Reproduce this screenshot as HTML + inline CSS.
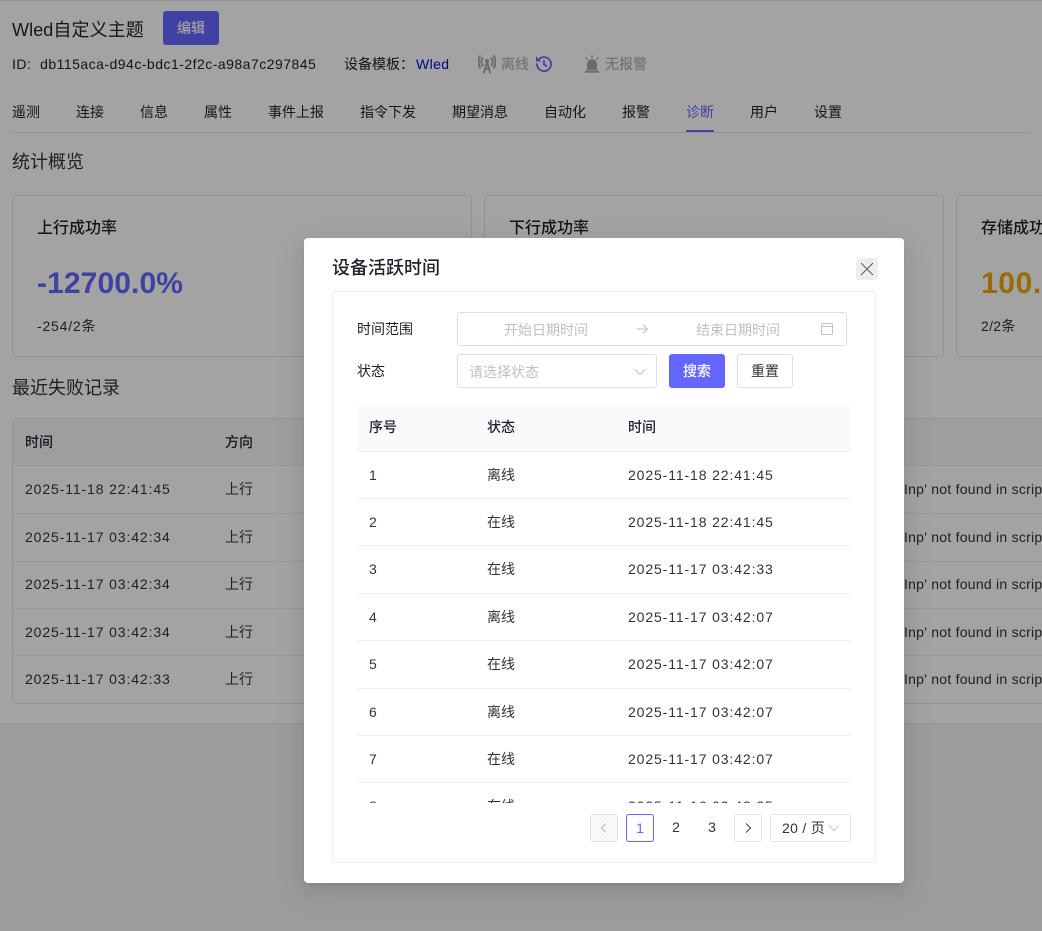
<!DOCTYPE html>
<html><head><meta charset="utf-8">
<style>
html,body{margin:0;padding:0;width:1042px;height:931px;overflow:hidden;background:#f3f4f7;}
body{position:relative;font-family:"Liberation Sans","Noto Sans CJK SC",sans-serif;color:#1d2129;font-size:14px;}
.t{position:absolute;line-height:20px;white-space:nowrap;}
.d{letter-spacing:.88px;}
.b{position:absolute;box-sizing:border-box;}
svg{position:absolute;}
#page{position:absolute;left:0;top:0;width:1042px;height:724px;background:#fff;border-bottom:1px solid #e5e6eb;box-sizing:border-box;overflow:hidden;border-top:1px solid #e4e4ea;}
#page>*{margin-top:-1px;}
#mask{position:absolute;inset:0;background:rgba(0,0,0,.36);}
#modal{position:absolute;left:304px;top:238px;width:600px;height:645px;background:#fff;border-radius:4px;box-shadow:0 6px 16px rgba(0,0,0,.08),0 3px 6px -4px rgba(0,0,0,.12),0 9px 28px 8px rgba(0,0,0,.05);}
.m{position:absolute;left:0;top:0;width:1042px;height:931px;}
.card{position:absolute;top:195px;height:162px;width:460px;border:1px solid #e5e6eb;border-radius:4px;box-sizing:border-box;}
.ln{position:absolute;height:1px;background:#eceef1;}
.pg{position:absolute;top:814px;width:28px;height:28px;box-sizing:border-box;border-radius:3px;text-align:center;line-height:26px;color:#333;}
</style></head><body>
<div id="page">
<div class="t" style="left:12px;top:20px;font-size:18px;color:#1d2129;letter-spacing:.1px">Wled自定义主题</div>
<div class="b" style="left:163px;top:11px;width:56px;height:34px;background:#6366ff;border-radius:3px;color:#fff;text-align:center;line-height:34px;font-weight:500">编辑</div>
<div class="t" style="left:12px;top:54px;color:#222;letter-spacing:.48px">ID:&nbsp; db115aca-d94c-bdc1-2f2c-a98a7c297845</div>
<div class="t" style="left:344px;top:54px;color:#222">设备模板：</div>
<div class="t" style="left:416px;top:54px;color:#0000d8;letter-spacing:.4px">Wled</div>
<svg style="left:478px;top:54px" width="18" height="20" viewBox="0 0 18 20" fill="none" stroke="#aaa" stroke-width="2" stroke-linecap="round"><path d="M4.5 4C3 6 3 9.500 4.500 11.500M13.500 4c1.500 2 1.500 5.500 0 7.500M2 2C0 5.500 0 10 2 13.500M16 2c2 3.500 2 8 0 11.500"/><circle cx="9" cy="7" r="2" fill="#aaa" stroke="none"/><path d="M9 8 6 18.500M9 8l3 10.500M7 15h4"/></svg>
<div class="t" style="left:501px;top:54px;color:#b4b4b4;font-weight:500">离线</div>
<svg style="left:535px;top:55px" width="18" height="18" viewBox="0 0 18 18" fill="none" stroke="#6366ff" stroke-width="1.700" stroke-linecap="round" stroke-linejoin="round"><path d="M3.200 5.200A7 7 0 1 1 2 9"/><path d="M1.500 2v4h4" fill="#6366ff" stroke-width="1"/><path d="M9 5.500V9.500l2.500 1.700"/></svg>
<svg style="left:583px;top:54px" width="18" height="20" viewBox="0 0 18 20" fill="#aaa" stroke="none"><path d="M4 16V10a5 5 0 0 1 10 0v6z"/><rect x="2" y="16.500" width="14" height="2.200"/><path d="M9 1v3M2.500 3.500l2 2M15.500 3.500l-2 2" stroke="#aaa" stroke-width="1.500"/></svg>
<div class="t" style="left:605px;top:54px;color:#b4b4b4;font-weight:500">无报警</div>

<div class="t" style="left:12px;top:102px">遥测</div>
<div class="t" style="left:76px;top:102px">连接</div>
<div class="t" style="left:140px;top:102px">信息</div>
<div class="t" style="left:204px;top:102px">属性</div>
<div class="t" style="left:268px;top:102px">事件上报</div>
<div class="t" style="left:360px;top:102px">指令下发</div>
<div class="t" style="left:452px;top:102px">期望消息</div>
<div class="t" style="left:544px;top:102px">自动化</div>
<div class="t" style="left:622px;top:102px">报警</div>
<div class="t" style="left:686px;top:102px;color:#6366ff">诊断</div>
<div class="t" style="left:750px;top:102px">用户</div>
<div class="t" style="left:814px;top:102px">设置</div>
<div class="ln" style="left:12px;top:132px;width:1018px;background:#e5e6eb"></div>
<div class="b" style="left:686px;top:130px;width:28px;height:2px;background:#6366ff"></div>
<div class="t" style="left:12px;top:152px;font-size:18px;color:#333">统计概览</div>

<div class="card" style="left:12px"></div>
<div class="card" style="left:484px"></div>
<div class="card" style="left:956px"></div>
<div class="t" style="left:37px;top:219px;font-size:16px;font-weight:500">上行成功率</div>
<div class="t" style="left:509px;top:219px;font-size:16px;font-weight:500">下行成功率</div>
<div class="t" style="left:981px;top:219px;font-size:16px;font-weight:500">存储成功率</div>
<div class="t" style="left:37px;top:269px;line-height:30px;font-size:30px;font-weight:700;color:#6366ff;letter-spacing:.1px">-12700.0%</div>
<div class="t" style="left:981px;top:269px;line-height:30px;font-size:30px;font-weight:700;color:#f0a80a;letter-spacing:.6px">100.0%</div>
<div class="t" style="left:37px;top:316px;color:#333;letter-spacing:.8px">-254/2条</div>
<div class="t" style="left:981px;top:316px;color:#333;letter-spacing:.3px">2/2条</div>

<div class="t" style="left:12px;top:378px;font-size:18px;color:#333">最近失败记录</div>
<div class="b" style="left:12px;top:418px;width:1100px;height:286px;border:1px solid #e5e6eb;border-radius:4px"></div>
<div class="b" style="left:13px;top:419px;width:1100px;height:46px;background:#f7f8fa"></div>
<div class="ln" style="left:13px;top:465px;width:1100px"></div>
<div class="ln" style="left:13px;top:513px;width:1100px"></div>
<div class="ln" style="left:13px;top:561px;width:1100px"></div>
<div class="ln" style="left:13px;top:608px;width:1100px"></div>
<div class="ln" style="left:13px;top:655px;width:1100px"></div>
<div class="t" style="left:25px;top:432px;font-weight:500">时间</div>
<div class="t" style="left:225px;top:432px;font-weight:500">方向</div>
<div class="t d" style="left:25px;top:479px;color:#333">2025-11-18 22:41:45</div><div class="t" style="left:225px;top:479px;color:#333">上行</div>
<div class="t d" style="left:25px;top:527px;color:#333">2025-11-17 03:42:34</div><div class="t" style="left:225px;top:527px;color:#333">上行</div>
<div class="t d" style="left:25px;top:574px;color:#333">2025-11-17 03:42:34</div><div class="t" style="left:225px;top:574px;color:#333">上行</div>
<div class="t d" style="left:25px;top:622px;color:#333">2025-11-17 03:42:34</div><div class="t" style="left:225px;top:622px;color:#333">上行</div>
<div class="t d" style="left:25px;top:669px;color:#333">2025-11-17 03:42:33</div><div class="t" style="left:225px;top:669px;color:#333">上行</div>
<div class="t" style="left:904px;top:479px;color:#333;letter-spacing:.25px">Inp' not found in script</div>
<div class="t" style="left:904px;top:527px;color:#333;letter-spacing:.25px">Inp' not found in script</div>
<div class="t" style="left:904px;top:574px;color:#333;letter-spacing:.25px">Inp' not found in script</div>
<div class="t" style="left:904px;top:622px;color:#333;letter-spacing:.25px">Inp' not found in script</div>
<div class="t" style="left:904px;top:669px;color:#333;letter-spacing:.25px">Inp' not found in script</div>
</div>
<div id="mask"></div>
<div id="modal"></div>
<div class="m">
<div class="t" style="left:332px;top:258px;font-size:18px;font-weight:500">设备活跃时间</div>
<div class="b" style="left:856px;top:258px;width:22px;height:22px;background:#ededed;border-radius:3px"></div>
<svg style="left:856px;top:258px" width="22" height="22" viewBox="0 0 22 22" stroke="#666" stroke-width="1.200" fill="none"><path d="M5 5l12 12M17 5 5 17"/></svg>
<div class="b" style="left:332px;top:291px;width:544px;height:572px;border:1px solid #eceef1;border-radius:3px"></div>

<div class="t" style="left:357px;top:319px">时间范围</div>
<div class="b" style="left:457px;top:312px;width:390px;height:34px;border:1px solid #dcdfe6;border-radius:3px"></div>
<div class="t" style="left:504px;top:320px;color:#bfbfbf">开始日期时间</div>
<svg style="left:635px;top:322px" width="14" height="14" viewBox="0 0 14 14" fill="none" stroke="#bfbfbf" stroke-width="1"><path d="M1.500 7h11M8 2.500 12.500 7 8 11.500"/></svg>
<div class="t" style="left:696px;top:320px;color:#bfbfbf">结束日期时间</div>
<svg style="left:820px;top:322px" width="14" height="14" viewBox="0 0 14 14" fill="none" stroke="#c4c4c4" stroke-width="1"><rect x="1.500" y="1.500" width="11" height="11" rx="1"/><path d="M1.500 4.500h11"/></svg>

<div class="t" style="left:357px;top:361px">状态</div>
<div class="b" style="left:457px;top:354px;width:200px;height:34px;border:1px solid #dcdfe6;border-radius:3px"></div>
<div class="t" style="left:470px;top:362px;color:#bfbfbf;margin-left:-1px">请选择状态</div>
<svg style="left:633px;top:365px" width="14" height="14" viewBox="0 0 14 14" fill="none" stroke="#c4c4c4" stroke-width="1"><path d="M2 4.500 7 9.500l5-5"/></svg>
<div class="b" style="left:669px;top:354px;width:56px;height:34px;background:#6366ff;border-radius:3px;color:#fff;text-align:center;line-height:34px;font-weight:500">搜索</div>
<div class="b" style="left:737px;top:354px;width:56px;height:34px;border:1px solid #dcdfe6;border-radius:3px;text-align:center;line-height:32px;color:#333">重置</div>

<div class="b" style="left:357px;top:404px;width:494px;height:399px;overflow:hidden">
<div class="b" style="left:0;top:0;width:494px;height:47px;background:#f9fafc"></div>
<div class="ln" style="left:0;top:47px;width:494px"></div>
<div class="ln" style="left:0;top:94px;width:494px"></div>
<div class="ln" style="left:0;top:141px;width:494px"></div>
<div class="ln" style="left:0;top:189px;width:494px"></div>
<div class="ln" style="left:0;top:236px;width:494px"></div>
<div class="ln" style="left:0;top:284px;width:494px"></div>
<div class="ln" style="left:0;top:331px;width:494px"></div>
<div class="ln" style="left:0;top:378px;width:494px"></div>
<div class="t" style="left:12px;top:13px;font-weight:500">序号</div><div class="t" style="left:130px;top:13px;font-weight:500">状态</div><div class="t" style="left:271px;top:13px;font-weight:500">时间</div>
<div class="t" style="left:12px;top:61px;color:#333">1</div><div class="t" style="left:130px;top:61px;color:#333">离线</div><div class="t d" style="left:271px;top:61px;color:#333">2025-11-18 22:41:45</div>
<div class="t" style="left:12px;top:108px;color:#333">2</div><div class="t" style="left:130px;top:108px;color:#333">在线</div><div class="t d" style="left:271px;top:108px;color:#333">2025-11-18 22:41:45</div>
<div class="t" style="left:12px;top:155px;color:#333">3</div><div class="t" style="left:130px;top:155px;color:#333">在线</div><div class="t d" style="left:271px;top:155px;color:#333">2025-11-17 03:42:33</div>
<div class="t" style="left:12px;top:203px;color:#333">4</div><div class="t" style="left:130px;top:203px;color:#333">离线</div><div class="t d" style="left:271px;top:203px;color:#333">2025-11-17 03:42:07</div>
<div class="t" style="left:12px;top:250px;color:#333">5</div><div class="t" style="left:130px;top:250px;color:#333">在线</div><div class="t d" style="left:271px;top:250px;color:#333">2025-11-17 03:42:07</div>
<div class="t" style="left:12px;top:298px;color:#333">6</div><div class="t" style="left:130px;top:298px;color:#333">离线</div><div class="t d" style="left:271px;top:298px;color:#333">2025-11-17 03:42:07</div>
<div class="t" style="left:12px;top:345px;color:#333">7</div><div class="t" style="left:130px;top:345px;color:#333">在线</div><div class="t d" style="left:271px;top:345px;color:#333">2025-11-17 03:42:07</div>
<div class="t" style="left:12px;top:392px;color:#333">8</div><div class="t" style="left:130px;top:392px;color:#333">在线</div><div class="t d" style="left:271px;top:392px;color:#333">2025-11-16 03:42:35</div>
</div>

<div class="pg" style="left:590px;background:#f7f8fa;border:1px solid #e3e4e9"></div>
<svg style="left:597px;top:821px" width="14" height="14" viewBox="0 0 14 14" fill="none" stroke="#bbb" stroke-width="1.100"><path d="M9 2.500 4.500 7 9 11.500"/></svg>
<div class="pg" style="left:626px;border:1px solid #6366ff;color:#6366ff">1</div>
<div class="pg" style="left:662px;line-height:27px">2</div>
<div class="pg" style="left:698px;line-height:27px">3</div>
<div class="pg" style="left:734px;border:1px solid #e3e4e9"></div>
<svg style="left:741px;top:821px" width="14" height="14" viewBox="0 0 14 14" fill="none" stroke="#444" stroke-width="1.100"><path d="M5 2.500 9.500 7 5 11.500"/></svg>
<div class="b" style="left:770px;top:814px;width:81px;height:28px;border:1px solid #e3e4e9;border-radius:3px"></div>
<div class="t" style="left:782px;top:818px;color:#333;letter-spacing:.3px">20 / 页</div>
<svg style="left:827px;top:821px" width="14" height="14" viewBox="0 0 14 14" fill="none" stroke="#c4c4c4" stroke-width="1"><path d="M2 4.500 7 9.500l5-5"/></svg>
</div>
</body></html>
